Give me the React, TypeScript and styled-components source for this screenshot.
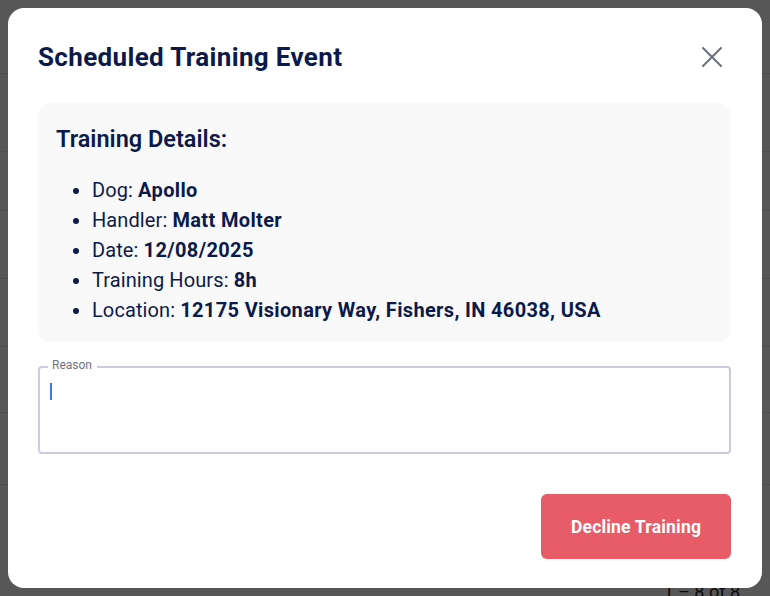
import * as React from 'react';
import styled, { createGlobalStyle } from 'styled-components';

const GlobalStyle = createGlobalStyle`
	html, body {
		margin: 0;
		padding: 0;
		background: #575757;
		font-family: Roboto, 'Liberation Sans', sans-serif;
	}
	* {
		box-sizing: border-box;
	}
`;

const navy = '#0c1a4b';

let Page = styled.div`
	width: 770px;
	height: 596px;
	overflow: hidden;
	display: flex;
	flex-direction: column;
	background: #fff;
`;
let PageRow = styled.div<{ h: number }>`
	height: ${(p) => p.h}px;
	border-bottom: 1px solid #e2e2e2;
	flex-shrink: 0;
`;
let Pager = styled.div`
	flex: 1;
	display: flex;
	justify-content: flex-end;
	align-items: flex-end;
	padding: 0 30px 0 0;
	font-size: 18px;
	color: #222;
	line-height: 1;
	transform: translateY(5px);
`;
let Overlay = styled.div`
	position: fixed;
	inset: 0;
	background: rgba(0, 0, 0, 0.66);
	display: flex;
	align-items: flex-start;
	justify-content: center;
	padding-top: 8px;
`;
let Modal = styled.div`
	width: 754px;
	height: 580px;
	background: #fff;
	border-radius: 16px;
	padding: 33px 31px 29px 30px;
	display: flex;
	flex-direction: column;
	color: ${navy};
`;
let Header = styled.div`
	display: flex;
	align-items: center;
	justify-content: space-between;
	height: 32px;
`;
let Title = styled.h2`
	margin: 0;
	font-size: 26px;
	font-weight: 700;
	line-height: 32px;
	letter-spacing: 0.35px;
`;
let CloseButton = styled.button`
	border: none;
	background: transparent;
	padding: 0;
	margin-right: 9px;
	width: 20px;
	height: 20px;
	display: flex;
	cursor: pointer;
`;
let DetailsCard = styled.div`
	margin-top: 30px;
	background: #f9f9fa;
	border-radius: 12px;
	padding: 20px 18px 17px 18px;
`;
let CardTitle = styled.h3`
	margin: 0;
	font-size: 23.5px;
	font-weight: 600;
	line-height: 32px;
`;
let DetailList = styled.ul`
	margin: 20px 0 0 0;
	padding-left: 36px;
	font-size: 20px;
	line-height: 30px;
	letter-spacing: 0.1px;
`;
let DetailItem = styled.li`
	& b {
		font-weight: 700;
		letter-spacing: 0.35px;
	}
`;
let Field = styled.div`
	position: relative;
	margin-top: 24px;
	height: 88px;
	border: 2px solid #cbccdb;
	border-radius: 4px;
	padding: 15px 10px;
`;
let FieldLabel = styled.span`
	position: absolute;
	top: -10px;
	left: 8px;
	padding: 0 5px 0 4px;
	background: #fff;
	font-size: 12px;
	line-height: 14px;
	color: #6e7380;
`;
let Caret = styled.span`
	display: block;
	width: 2px;
	height: 17px;
	background: #3b78e2;
`;
let Footer = styled.div`
	margin-top: auto;
	display: flex;
	justify-content: flex-end;
`;
let DeclineButton = styled.button`
	width: 190px;
	height: 65px;
	border: none;
	border-radius: 6px;
	background: #e75c66;
	color: #fff;
	font-family: Roboto, 'Liberation Sans', sans-serif;
	font-size: 17.5px;
	font-weight: 700;
	letter-spacing: 0.2px;
	cursor: pointer;
`;

const details = [
	{ label: 'Dog', value: 'Apollo' },
	{ label: 'Handler', value: 'Matt Molter' },
	{ label: 'Date', value: '12/08/2025' },
	{ label: 'Training Hours', value: '8h' },
	{ label: 'Location', value: '12175 Visionary Way, Fishers, IN 46038, USA' },
];

const App: React.FunctionComponent = () => {
	return (
		<>
			<GlobalStyle />
			<Page>
				<PageRow h={74} />
				<PageRow h={78} />
				<PageRow h={59} />
				<PageRow h={68} />
				<PageRow h={68} />
				<PageRow h={66} />
				<PageRow h={72} />
				<Pager>1 – 8 of 8</Pager>
			</Page>
			<Overlay>
				<Modal>
					<Header>
						<Title>Scheduled Training Event</Title>
						<CloseButton aria-label='Close'>
							<svg width='20' height='20' viewBox='0 0 20 20'>
								<path
									d='M1 1 L19 19 M19 1 L1 19'
									stroke='#6b7080'
									strokeWidth='2'
									strokeLinecap='round'
								/>
							</svg>
						</CloseButton>
					</Header>
					<DetailsCard>
						<CardTitle>Training Details:</CardTitle>
						<DetailList>
							{details.map((d) => (
								<DetailItem key={d.label}>
									{d.label}: <b>{d.value}</b>
								</DetailItem>
							))}
						</DetailList>
					</DetailsCard>
					<Field>
						<FieldLabel>Reason</FieldLabel>
						<Caret />
					</Field>
					<Footer>
						<DeclineButton>Decline Training</DeclineButton>
					</Footer>
				</Modal>
			</Overlay>
		</>
	);
};

export default App;
